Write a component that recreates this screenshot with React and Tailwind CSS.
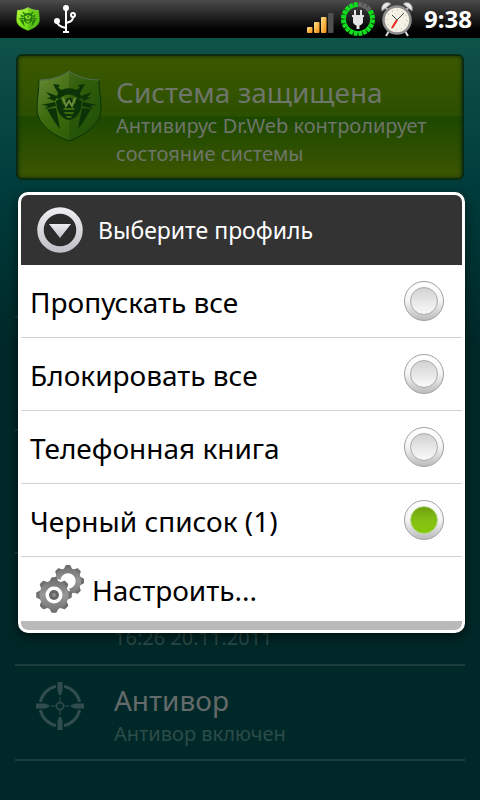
const profiles = [
  { id: 'allow', label: 'Пропускать все' },
  { id: 'block', label: 'Блокировать все' },
  { id: 'contacts', label: 'Телефонная книга' },
  { id: 'blacklist', label: 'Черный список (1)' },
]

function SpiderShield({ dimmed = false, className = '' }) {
  const id = dimmed ? 'shield-dim' : 'shield'
  const stops = dimmed
    ? ['#6d8c3c', '#3c6a0c', '#255806']
    : ['#c4fa4c', '#84e820', '#58c814']
  const ink = dimmed ? '#0a3408' : '#24780c'

  return (
    <svg viewBox="0 0 66 72" className={className} preserveAspectRatio="none" aria-hidden="true">
      <defs>
        <linearGradient id={id} x1="0" y1="0" x2="0.9" y2="1">
          <stop offset="0" stopColor={stops[0]} />
          <stop offset="0.45" stopColor={stops[1]} />
          <stop offset="1" stopColor={stops[2]} />
        </linearGradient>
      </defs>
      <path
        d="M33 1C25 7 14 10 3 10C3 20 1 29 1 40C2 55 17 65 33 71C49 65 64 55 65 40C65 29 63 20 63 10C52 10 41 7 33 1Z"
        fill={`url(#${id})`}
        stroke={ink}
        strokeWidth="1"
      />
      <path
        d="M33 1C41 7 52 10 63 10C63 20 65 29 65 40C64 55 49 65 33 71Z"
        fill={ink}
        opacity="0.22"
      />
      <path
        d="M3 10C14 10 25 7 33 1C41 7 52 10 63 10"
        fill="none"
        stroke="#fff"
        strokeWidth="1"
        opacity={dimmed ? 0.3 : 0.6}
      />
      <g fill={ink}>
        <path d="M20 28C24 15 42 15 46 28L43 29C37 23 29 23 23 29Z" />
        <path d="M20 31L25 28L27 35L31 28H35L39 35L41 28L46 31L45 38C43 45 39 49 33 50C27 49 23 45 21 38Z" />
        <path d="M27 38H39L38 40H28ZM28 42H38L37 44H29ZM30 46H36L35 48H31Z" fill={stops[1]} />
        <path d="M27 28L30 36L33 31L36 36L39 28" fill="none" stroke={stops[0]} strokeWidth="2" />
        <path d="M17 14L24 15L22 18L28 21L23 25Z" />
        <path d="M49 14L42 15L44 18L38 21L43 25Z" />
        <path d="M10 22L21 26L19 31L11 28L15 27Z" />
        <path d="M56 22L45 26L47 31L55 28L51 27Z" />
        <path d="M5 35L19 32L20 36L8 39L12 36Z" />
        <path d="M61 35L47 32L46 36L58 39L54 36Z" />
        <path d="M11 39L20 38L24 59L18 51Z" />
        <path d="M55 39L46 38L42 59L48 51Z" />
      </g>
    </svg>
  )
}

function UsbIcon() {
  return (
    <svg viewBox="0 0 24 30" className="h-[30px] w-6" fill="none" stroke="#fff" strokeWidth="2" aria-hidden="true">
      <path d="M12 4V28M9 28H15" />
      <path d="M3 17C3 21 7 23 12 24M19 13C19 17 16 18 12 19" />
      <circle cx="12" cy="4" r="2" fill="#fff" />
      <circle cx="3" cy="17" r="2" fill="#fff" />
      <circle cx="19" cy="11" r="2" />
    </svg>
  )
}

function SignalIcon() {
  return (
    <svg viewBox="0 0 27 22" className="mt-2 mr-0.5 h-[22px] w-[27px]" aria-hidden="true">
      <defs>
        <linearGradient id="signal" x1="0" y1="0" x2="1" y2="1">
          <stop offset="0" stopColor="#ffe08a" />
          <stop offset="1" stopColor="#f08c08" />
        </linearGradient>
      </defs>
      <rect x="0" y="15" width="5.500" height="6" rx="1" fill="url(#signal)" />
      <rect x="7" y="10" width="5.500" height="11" rx="1" fill="url(#signal)" />
      <rect x="14" y="5" width="5.500" height="16" rx="1" fill="url(#signal)" />
      <rect x="21" y="1" width="5.500" height="20" rx="1" fill="#505050" />
    </svg>
  )
}

function ChargingIcon() {
  return (
    <svg viewBox="0 0 36 36" className="h-9 w-9" aria-hidden="true">
      <g strokeWidth="5">
        {Array.from({ length: 20 }, (_, index) => (
          <path
            key={index}
            d="M16 3.5H20"
            stroke={index < 3 ? '#666' : '#12dc1e'}
            transform={`rotate(${index * 18 + 9} 18 18)`}
          />
        ))}
      </g>
      <path
        d="M14 9H16V14H20V9H22V14H24V16H23V21C23 23 21 24 19.5 24.500V28H16.500V24.500C15 24 13 23 13 21V16H12V14H14Z"
        fill="#e4e4e4"
      />
    </svg>
  )
}

function AlarmIcon() {
  return (
    <svg viewBox="0 0 34 36" className="h-9 w-[34px]" aria-hidden="true">
      <path d="M9 30L6 35M25 30L28 35" stroke="#ddd" strokeWidth="2" />
      <path d="M2 10C0 3 7 -1 11 3Z" fill="#e8e8e8" stroke="#888" />
      <path d="M32 10C34 3 27 -1 23 3Z" fill="#e8e8e8" stroke="#888" />
      <path d="M6 7L9 10M28 7L25 10" stroke="#bbb" strokeWidth="2" />
      <circle cx="17" cy="19" r="13.500" fill="#f4f1e4" stroke="#8c8c8c" strokeWidth="2.500" />
      <circle cx="17" cy="19" r="10" fill="none" stroke="#a8a598" strokeWidth="1" strokeDasharray="1 4.200" />
      <path d="M12 14L17 19L24 12" fill="none" stroke="#444" strokeWidth="1" />
      <path d="M17 19L12 27" stroke="#e8281c" strokeWidth="2" />
    </svg>
  )
}

function CrosshairIcon() {
  return (
    <svg viewBox="0 0 48 48" className="h-12 w-12" fill="none" stroke="#304c4c" aria-hidden="true">
      <path
        d="M28 4.400A20 20 0 0 1 43.600 20M43.600 28A20 20 0 0 1 28 43.600M20 43.600A20 20 0 0 1 4.400 28M4.400 20A20 20 0 0 1 20 4.400"
        strokeWidth="3"
      />
      <circle cx="24" cy="24" r="3.500" strokeWidth="1.500" />
      <path d="M24 15V21M24 27V33M15 24H21M27 24H33" strokeWidth="1" />
      <g fill="#304c4c" stroke="none">
        {[0, 90, 180, 270].map((angle) => (
          <path key={angle} d="M21.500 0H26.500V9L25 13H23L21.500 9Z" transform={`rotate(${angle} 24 24)`} />
        ))}
      </g>
    </svg>
  )
}

function DialogIcon() {
  return (
    <svg viewBox="0 0 46 46" className="h-[46px] w-[46px]" aria-hidden="true">
      <defs>
        <linearGradient id="ring" x1="0" y1="0" x2="0" y2="1">
          <stop offset="0" stopColor="#ececf0" />
          <stop offset="1" stopColor="#c2c2c8" />
        </linearGradient>
      </defs>
      <circle cx="23" cy="23" r="19.500" fill="#2b2b2b" stroke="url(#ring)" strokeWidth="6.500" />
      <path d="M12 17H34L23 31Z" fill="url(#ring)" />
    </svg>
  )
}

function Gear({ fill }) {
  return (
    <g fill={fill} stroke={fill} strokeLinejoin="round">
      {Array.from({ length: 8 }, (_, index) => (
        <path key={index} d="M-4.500 -12L-2 -17H2L4.500 -12Z" strokeWidth="1.500" transform={`rotate(${index * 45})`} />
      ))}
      <circle r="11.500" fill="none" strokeWidth="6" />
    </g>
  )
}

function GearsIcon() {
  return (
    <svg viewBox="0 0 48 48" className="h-12 w-12" aria-hidden="true">
      <defs>
        <linearGradient id="gear" gradientUnits="userSpaceOnUse" x1="0" y1="-18" x2="0" y2="18">
          <stop offset="0" stopColor="#6a6a6a" />
          <stop offset="0.5" stopColor="#989898" />
          <stop offset="1" stopColor="#707070" />
        </linearGradient>
      </defs>
      <g transform="translate(32 16) scale(0.9)">
        <Gear fill="url(#gear)" />
      </g>
      <path d="M18 14A16 16 0 1 1 17.900 14Z" fill="#fff" stroke="#fff" strokeWidth="1" />
      <g transform="translate(18 30)">
        <Gear fill="url(#gear)" />
        <circle r="5" fill="#666" />
        <circle r="2" fill="#8c8c8c" />
      </g>
    </svg>
  )
}

function StatusBar() {
  return (
    <header className="flex h-[38px] items-center justify-between bg-linear-to-b from-[#4c4c4c] via-[#1c1c1c] to-black pr-2 pl-4">
      <div className="flex items-center gap-3.5">
        <SpiderShield className="h-6 w-6" />
        <UsbIcon />
      </div>
      <div className="flex items-center gap-1">
        <SignalIcon />
        <ChargingIcon />
        <AlarmIcon />
        <time className="ml-1.5 text-2xl font-bold text-white">9:38</time>
      </div>
    </header>
  )
}

function ProtectionCard() {
  return (
    <section className="mx-4 mt-4 flex h-[126px] gap-3.5 rounded-md border-2 border-[#0b2a10] bg-[linear-gradient(to_bottom,#3d5800_0%,#2c5000_49%,#1c4800_50%,#3d5600_100%)] pt-3.5 pl-[18px] shadow-[inset_0_0_4px_#0b2a10]">
      <SpiderShield dimmed className="h-[72px] w-[66px] shrink-0" />
      <div className="pt-1 text-[#6e756a]">
        <h1 className="text-[28px] leading-9">Система защищена</h1>
        <p className="pt-0.5 text-xl leading-7">Антивирус Dr.Web контролирует состояние системы</p>
      </div>
    </section>
  )
}

function FeatureList() {
  return (
    <ul className="mx-[15px] mt-[10px] text-[#2c4c48]">
      <li className="h-32 border-b-2 border-[#1d3c3c]" />
      <li className="h-[113px] border-b-2 border-[#1d3c3c]" />
      <li className="h-[123px] border-b-2 border-[#1d3c3c]" />
      <li className="flex h-28 items-end border-b-2 border-[#1d3c3c] pb-3 pl-[99px]">
        <p className="text-xl leading-7">16:26 20.11.2011</p>
      </li>
      <li className="flex h-[95px] gap-[30px] border-b-2 border-[#1d3c3c] pt-4 pl-[21px]">
        <CrosshairIcon />
        <div>
          <h2 className="text-[28px] leading-9 text-[#646a6a]">Антивор</h2>
          <p className="text-xl leading-8">Антивор включен</p>
        </div>
      </li>
    </ul>
  )
}

function ProfileDialog() {
  return (
    <div
      role="dialog"
      aria-labelledby="dialog-title"
      className="absolute top-48 right-[15px] left-[18px] overflow-hidden rounded-[10px] border-3 border-white bg-white shadow-[0_4px_12px_rgba(0,0,0,0.6)]"
    >
      <div className="flex h-[70px] items-center gap-[15px] bg-[#333] pl-4">
        <DialogIcon />
        <h2 id="dialog-title" className="text-[23px] text-white">
          Выберите профиль
        </h2>
      </div>
      <form>
        {profiles.map((profile) => (
          <label
            key={profile.id}
            className="flex h-[73px] items-center justify-between border-b border-[#d2d2d2] pr-[18px] pl-[9px] text-[28px] text-black"
          >
            <span className="pt-0.5">{profile.label}</span>
            <input
              type="radio"
              name="profile"
              value={profile.id}
              defaultChecked={profile.id === 'blacklist'}
              className="flex size-10 appearance-none items-center justify-center rounded-full border border-[#a0a0a0] bg-linear-to-b from-white via-[#f4f4f4] to-[#bcbcbc] before:size-7 before:rounded-full before:border before:border-[#aaa] before:bg-linear-to-b before:from-[#d2d2d2] before:to-[#fafafa] before:content-[''] checked:before:border-[#b4d880] checked:before:from-[#6fa012] checked:before:via-[#84be14] checked:before:to-[#84c808]"
            />
          </label>
        ))}
        <button type="button" className="flex h-16 w-full items-center gap-2 pl-[15px] text-[28px] text-black">
          <GearsIcon />
          <span className="pt-0.5">Настроить...</span>
        </button>
      </form>
      <div className="h-[9px] rounded-b-md bg-[#b9b9b9]" />
    </div>
  )
}

export default function App() {
  return (
    <div className="relative min-h-screen bg-black font-['Noto_Sans','Open_Sans',sans-serif]">
      <StatusBar />
      <main className="min-h-[762px] overflow-hidden bg-[linear-gradient(to_bottom,#0f5248_0px,#003c3c_150px,#002828_310px)]">
        <ProtectionCard />
        <FeatureList />
      </main>
      <ProfileDialog />
    </div>
  )
}
